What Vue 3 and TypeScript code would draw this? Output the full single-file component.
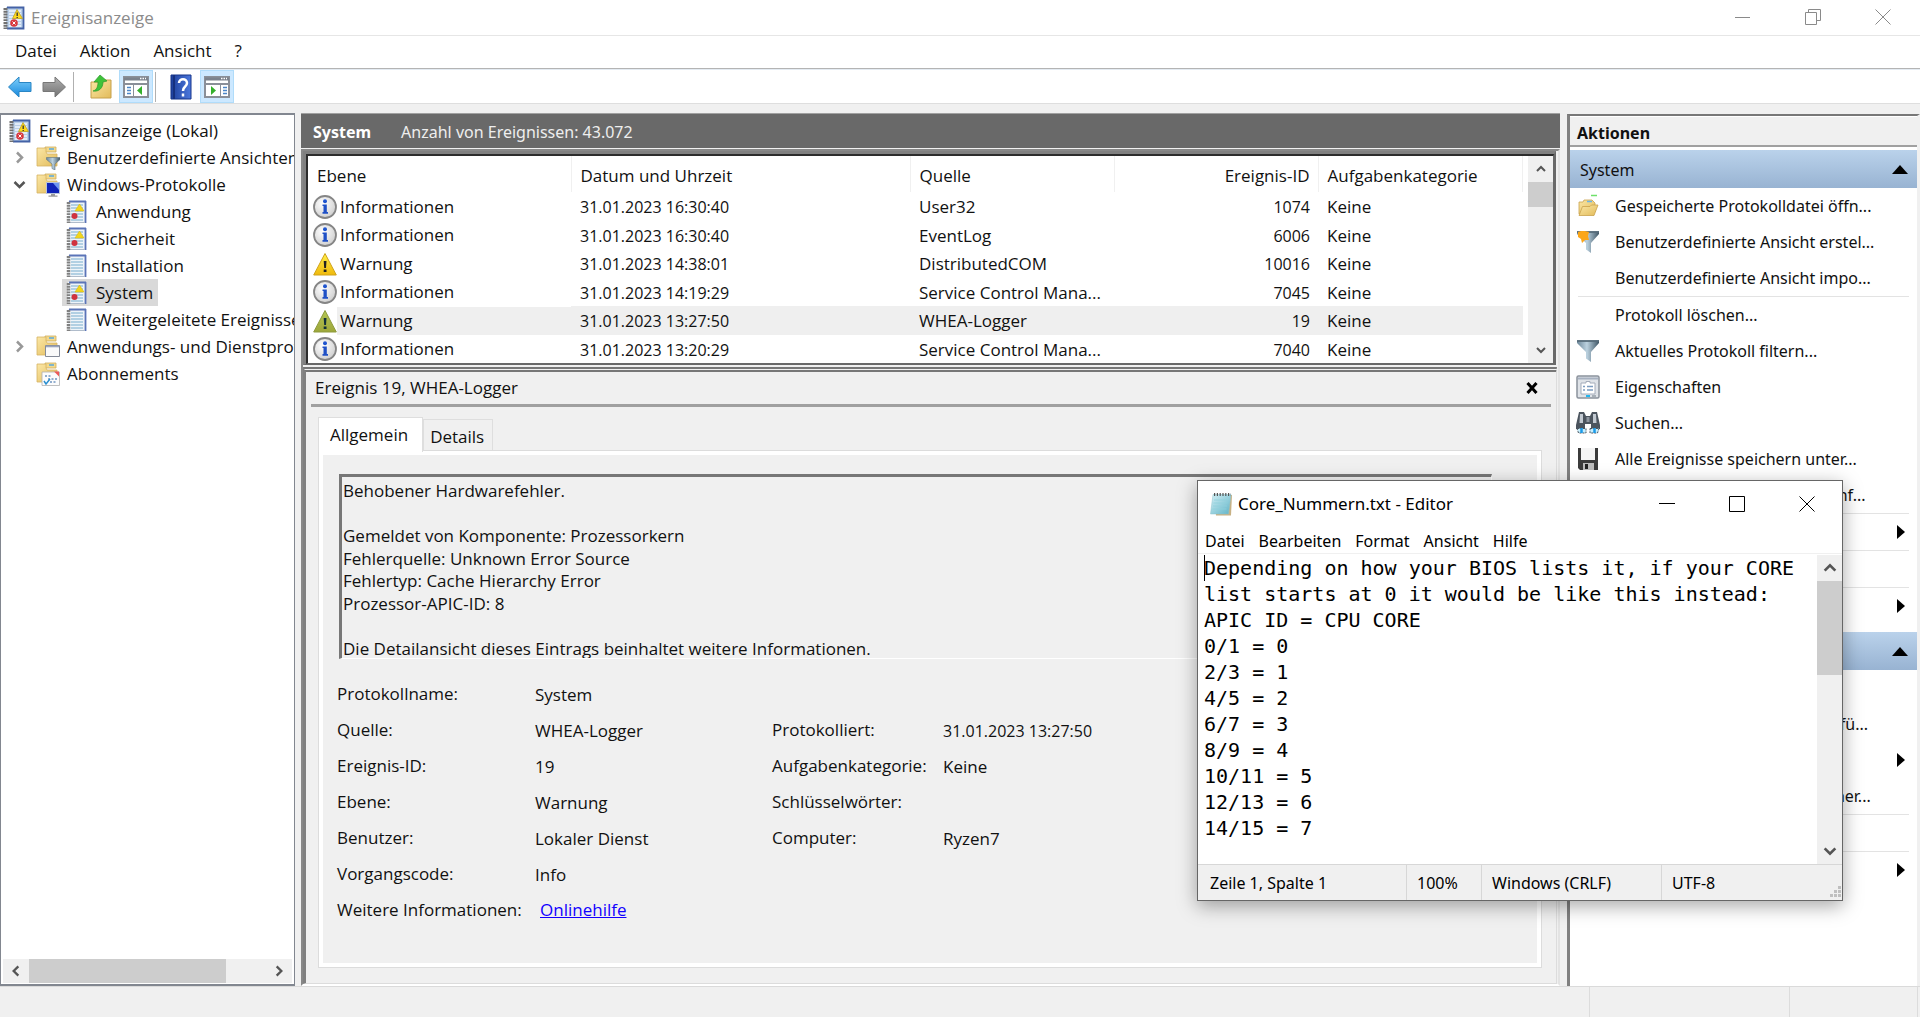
<script setup lang="ts">
import { ref } from 'vue'

interface TreeNode { label: string; icon: string; level: number; arrow?: 'open' | 'closed'; selected?: boolean }
interface EventRow { level: 'Informationen' | 'Warnung'; date: string; source: string; id: number; selected?: boolean }
interface Action { label: string; icon?: string; sub?: boolean; line?: boolean }

const tree: TreeNode[] = [
  { label: 'Ereignisanzeige (Lokal)', icon: 'viewer', level: 0 },
  { label: 'Benutzerdefinierte Ansichten', icon: 'folder-filter', level: 1, arrow: 'closed' },
  { label: 'Windows-Protokolle', icon: 'folder-screen', level: 1, arrow: 'open' },
  { label: 'Anwendung', icon: 'log', level: 2 },
  { label: 'Sicherheit', icon: 'log', level: 2 },
  { label: 'Installation', icon: 'log-plain', level: 2 },
  { label: 'System', icon: 'log', level: 2, selected: true },
  { label: 'Weitergeleitete Ereignisse', icon: 'log-plain', level: 2 },
  { label: 'Anwendungs- und Dienstprotokolle', icon: 'folder-window', level: 1, arrow: 'closed' },
  { label: 'Abonnements', icon: 'folder-calendar', level: 1 },
]

const events: EventRow[] = [
  { level: 'Informationen', date: '31.01.2023 16:30:40', source: 'User32', id: 1074 },
  { level: 'Informationen', date: '31.01.2023 16:30:40', source: 'EventLog', id: 6006 },
  { level: 'Warnung', date: '31.01.2023 14:38:01', source: 'DistributedCOM', id: 10016 },
  { level: 'Informationen', date: '31.01.2023 14:19:29', source: 'Service Control Mana...', id: 7045 },
  { level: 'Warnung', date: '31.01.2023 13:27:50', source: 'WHEA-Logger', id: 19, selected: true },
  { level: 'Informationen', date: '31.01.2023 13:20:29', source: 'Service Control Mana...', id: 7040 },
]

const message: string[] = [
  'Behobener Hardwarefehler.',
  '',
  'Gemeldet von Komponente: Prozessorkern',
  'Fehlerquelle: Unknown Error Source',
  'Fehlertyp: Cache Hierarchy Error',
  'Prozessor-APIC-ID: 8',
  '',
  'Die Detailansicht dieses Eintrags beinhaltet weitere Informationen.',
]

const fields: string[][] = [
  ['Protokollname:', 'System', '', ''],
  ['Quelle:', 'WHEA-Logger', 'Protokolliert:', '31.01.2023 13:27:50'],
  ['Ereignis-ID:', '19', 'Aufgabenkategorie:', 'Keine'],
  ['Ebene:', 'Warnung', 'Schlüsselwörter:', ''],
  ['Benutzer:', 'Lokaler Dienst', 'Computer:', 'Ryzen7'],
  ['Vorgangscode:', 'Info', '', ''],
]

const logActions: Action[] = [
  { label: 'Gespeicherte Protokolldatei öffn...', icon: 'open' },
  { label: 'Benutzerdefinierte Ansicht erstel...', icon: 'filter-new' },
  { label: 'Benutzerdefinierte Ansicht impo...' },
  { label: 'Protokoll löschen...', line: true },
  { label: 'Aktuelles Protokoll filtern...', icon: 'filter' },
  { label: 'Eigenschaften', icon: 'props' },
  { label: 'Suchen...', icon: 'find' },
  { label: 'Alle Ereignisse speichern unter...', icon: 'save' },
  { label: 'Aufgabe an dieses Protokoll anf...' },
  { label: 'Ansicht', sub: true, line: true },
  { label: 'Aktualisieren', line: true },
  { label: 'Hilfe', sub: true, line: true },
]
const eventActions: Action[] = [
  { label: 'Ereigniseigenschaften' },
  { label: 'Aufgabe an dieses Ereignis anfü...' },
  { label: 'Kopieren', sub: true },
  { label: 'Ausgewählte Ereignisse speicher...' },
  { label: 'Aktualisieren', line: true },
  { label: 'Hilfe', sub: true, line: true },
]
const groups = [
  { title: 'System', items: logActions },
  { title: 'Ereignis 19, WHEA-Logger', items: eventActions },
]

const note = ref(
  [
    'Depending on how your BIOS lists it, if your CORE list starts at 0 it would be like this instead:',
    'APIC ID = CPU CORE',
    '0/1 = 0', '2/3 = 1', '4/5 = 2', '6/7 = 3', '8/9 = 4',
    '10/11 = 5', '12/13 = 6', '14/15 = 7',
  ].join('\n'),
)
</script>

<template>
  <div class="app">
    <svg class="defs" aria-hidden="true">
      <defs>
        <linearGradient id="gFolder" x1="0" y1="0" x2="1" y2="1"><stop offset="0" stop-color="#fbe7a6" /><stop offset="1" stop-color="#e2bb5a" /></linearGradient>
        <linearGradient id="gBlue" x1="0" y1="0" x2="0" y2="1"><stop offset="0" stop-color="#7fd0fb" /><stop offset="1" stop-color="#1787dc" /></linearGradient>
        <linearGradient id="gGray" x1="0" y1="0" x2="0" y2="1"><stop offset="0" stop-color="#b0b0b0" /><stop offset="1" stop-color="#727272" /></linearGradient>
        <linearGradient id="gSteel" x1="0" y1="0" x2="1" y2="0"><stop offset="0" stop-color="#6c8799" /><stop offset=".45" stop-color="#bcd2e0" /><stop offset="1" stop-color="#3f5665" /></linearGradient>
        <linearGradient id="gWarn" x1="0" y1="0" x2="0" y2="1"><stop offset="0" stop-color="#fff04a" /><stop offset="1" stop-color="#f0b90c" /></linearGradient>
        <linearGradient id="gOlive" x1="0" y1="0" x2="0" y2="1"><stop offset="0" stop-color="#b4c653" /><stop offset="1" stop-color="#9da63a" /></linearGradient>
        <radialGradient id="gInfo" cx=".4" cy=".35" r=".7"><stop offset="0" stop-color="#fff" /><stop offset="1" stop-color="#cdcdcd" /></radialGradient>
        <linearGradient id="gHelp" x1="0" y1="0" x2="1" y2="0"><stop offset="0" stop-color="#1d3f9c" /><stop offset="1" stop-color="#4c78dc" /></linearGradient>
        <linearGradient id="gPad" x1="0" y1="0" x2="1" y2="1"><stop offset="0" stop-color="#d4f0f6" /><stop offset="1" stop-color="#5fb3c6" /></linearGradient>
      </defs>
      <symbol id="log-plain" viewBox="0 0 24 24">
        <path d="M3 1h18v21H3z" fill="#eef4f9" />
        <path d="M6 5h12M6 8h12M6 11h12M6 14h12M6 17h12M6 20h12" stroke="#9ec4dc" stroke-width="1.3" />
        <path d="M4 1.500h17M20.500 1v22" fill="none" stroke="#5b74b8" stroke-width="1.800" /><path d="M4 22.500h16" stroke="#b0bccb" />
        <path d="M3.500 2v21" stroke="#808080" stroke-width="3.500" stroke-dasharray="1.900 .9" />
      </symbol>
      <symbol id="log" viewBox="0 0 24 24">
        <use href="#log-plain" />
        <path d="M14.500 4l4.500 7h-9z" fill="#f3d61c" stroke="#d6b818" stroke-width=".6" />
        <circle cx="9.500" cy="16" r="3" fill="#d03340" />
      </symbol>
      <symbol id="viewer" viewBox="0 0 24 24">
        <path d="M4 1h18v22H4z" fill="#b9cfe8" />
        <path d="M7 5h12M7 8h12M7 11h12M7 14h12M7 17h12M7 20h12" stroke="#eef5fc" stroke-width="1.300" />
        <path d="M5 1.500h16.500v21H5" fill="none" stroke="#4462a6" stroke-width="1.800" />
        <path d="M3.500 2v21" stroke="#707070" stroke-width="4" stroke-dasharray="1.900 .9" />
        <path d="M15 3.500l5.500 9h-10z" fill="#ffd91c" stroke="#b89b18" stroke-width=".7" />
        <path d="M15.200 6.500v3.500M15.200 11v1" stroke="#333" stroke-width="1.300" />
        <circle cx="12" cy="17" r="3.800" fill="#d8383e" /><path d="M10.500 15.500l3 3M13.500 15.500l-3 3" stroke="#fff" />
      </symbol>
      <symbol id="folder" viewBox="0 0 24 24">
        <path d="M9 1h11v5H9z" fill="#f4d98c" stroke="#cfae5e" stroke-width=".8" /><path d="M13 3h5" stroke="#58a8e0" stroke-width="1.500" />
        <path d="M1 2h9v4l1 2h10v12H1z" fill="url(#gFolder)" stroke="#d5b262" stroke-width=".8" />
      </symbol>
      <symbol id="folder-filter" viewBox="0 0 24 24">
        <use href="#folder" /><path d="M10.500 11.500h13.500v2l-5 4.500v6l-3-1.500v-4.500l-5.500-4.500z" fill="url(#gSteel)" stroke="#5f7480" stroke-width=".6" />
      </symbol>
      <symbol id="folder-screen" viewBox="0 0 24 24">
        <use href="#folder" /><path d="M10.500 9.500h13v11h-13z" fill="#1023b8" stroke="#b8c4dc" /><path d="M17 10h6v7z" fill="#6f95f0" /><path d="M15 21h4v1.500h2.500v1.300h-9v-1.300H15z" fill="#9a9a9a" />
      </symbol>
      <symbol id="folder-window" viewBox="0 0 24 24">
        <use href="#folder" /><path d="M9.500 10.500h14v11h-14z" fill="#fafafa" stroke="#858b98" /><path d="M10 11.500h13" stroke="#9aa4bd" stroke-width="1.600" />
      </symbol>
      <symbol id="folder-calendar" viewBox="0 0 24 24">
        <use href="#folder" /><path d="M6 10h17.500v13.500H6z" fill="#fcfcfc" stroke="#b0b0b0" stroke-width=".8" /><path d="M18 9.500h5v5z" fill="#ee5a5a" />
        <path d="M9 14h7M12 17h10M14 20h7" stroke="#6f94c0" stroke-width="1.600" stroke-dasharray="2 1.500" /><path d="M8 19l2 3 4-5" fill="none" stroke="#2a8fd0" stroke-width="1.500" />
      </symbol>
      <symbol id="info" viewBox="0 0 24 24">
        <circle cx="12" cy="12" r="11" fill="url(#gInfo)" stroke="#858585" stroke-width="1.800" />
        <circle cx="12" cy="6.300" r="2" fill="#1f55cf" /><path d="M9.500 9.500h4.300V17H15v1.700H9.500V17h1v-6h-1z" fill="#1f50c6" />
      </symbol>
      <symbol id="warn" viewBox="0 0 24 24"><path d="M12 1.500L23.300 23H.7z" fill="url(#gWarn)" stroke="#cfa21a" stroke-linejoin="round" /><path d="M10.700 9h2.800l-.5 7h-1.800zM10.700 17.500h2.800V20h-2.800z" fill="#222" /></symbol>
      <symbol id="warn-sel" viewBox="0 0 24 24"><path d="M12 1.500L23.300 23H.7z" fill="url(#gOlive)" stroke="#8d9a3c" stroke-linejoin="round" /><path d="M10.700 9h2.800l-.5 7h-1.800zM10.700 17.500h2.800V20h-2.800z" fill="#12303a" /></symbol>
      <symbol id="open" viewBox="0 0 24 24">
        <path d="M15 1.500h6" stroke="#6fe06a" stroke-width="1.500" />
        <path d="M3 20V8h4l1-2h8l3 3v9z" fill="url(#gFolder)" stroke="#c9a24c" stroke-width=".8" /><path d="M11 7.500h5" stroke="#6db4e4" stroke-width="1.500" />
        <path d="M3 21.500l3.500-9H14l1.500-1.500H22l-4 10.500z" fill="url(#gFolder)" stroke="#c9a24c" stroke-width=".8" />
      </symbol>
      <symbol id="filter" viewBox="0 0 24 24"><path d="M1 1.500h22v2.500l-8 9V23l-5-3.500v-6.500L1 4z" fill="url(#gSteel)" /><path d="M1 2h22" stroke="#566b7a" stroke-width="1.800" /></symbol>
      <symbol id="filter-new" viewBox="0 0 24 24"><use href="#filter" /><path d="M2 2l3-1 4 0 4 1-1 4 1 4-4 0-3 3-1-4-3-2z" fill="#fba618" /></symbol>
      <symbol id="props" viewBox="0 0 24 24">
        <rect x="1" y="1" width="22" height="22" rx="1.500" fill="#dfe3e8" stroke="#8b929c" stroke-width="1.500" /><path d="M2 3.500h20" stroke="#a7b1c0" stroke-width="2" />
        <path d="M5 8h5V6.500h4V8h5v11H5z" fill="#fff" stroke="#a4acba" /><path d="M7 11.500h2M7 15h2M11 11.500h6M11 15h6" stroke="#7c9cc0" stroke-width="1.300" /><path d="M10 21h4" stroke="#21b6ef" stroke-width="2" /><path d="M16 21h4" stroke="#a8b0b8" stroke-width="2" />
      </symbol>
      <symbol id="find" viewBox="0 0 24 24">
        <path d="M3 1h5l2 4h4l2-4h5l3 13v4h-9v-5h-6v5H0v-4z" fill="#4b545e" /><path d="M4 3h3v9H3.500zM17 3h3l.5 9H17z" fill="#c3cad2" /><path d="M10.500 6h3v5h-3z" fill="#8e96a0" />
        <path d="M1 17.500h9V22H2.500zM14 17.500h9L21.500 22H14z" fill="#c6efff" stroke="#4c5660" stroke-dasharray="2 1" /><path d="M5.500 17v5M18.500 17v5" stroke="#1c9ae8" stroke-width="2.500" />
      </symbol>
      <symbol id="save" viewBox="0 0 24 24"><path d="M2 1h20v22H4l-2-2z" fill="#3b3b3b" /><path d="M5 1h14v12H5z" fill="#f5f5f5" /><path d="M7 16h11v7H7z" fill="#bdbdbd" /><path d="M9 17h3v5H9z" fill="#222" /></symbol>
      <symbol id="pad" viewBox="0 0 24 24">
        <path d="M5 3h18l-1 20.500H7z" fill="#c8b184" /><path d="M4 2.500h18L19.500 22H1.500z" fill="url(#gPad)" stroke="#8fc2cd" stroke-width=".5" />
        <path d="M5 8h14M4.500 11h14M4 14h14M3.500 17h14" stroke="#8fd0dc" stroke-width=".8" /><path d="M5 2.500h17" stroke="#555" stroke-width="3" stroke-dasharray="1.200 1.600" />
      </symbol>
      <symbol id="up" viewBox="0 0 12 12"><path d="M2 8l4-4 4 4" fill="none" stroke="#555" stroke-width="2" /></symbol>
      <symbol id="down" viewBox="0 0 12 12"><path d="M2 4l4 4 4-4" fill="none" stroke="#555" stroke-width="2" /></symbol>
      <symbol id="left" viewBox="0 0 12 12"><path d="M8 2L4 6l4 4" fill="none" stroke="#555" stroke-width="2" /></symbol>
      <symbol id="right" viewBox="0 0 12 12"><path d="M4 2l4 4-4 4" fill="none" stroke="#555" stroke-width="2" /></symbol>
    </svg>

    <header class="titlebar">
      <svg class="ico"><use href="#viewer" /></svg>
      <h1>Ereignisanzeige</h1>
      <div class="winbtns">
        <button aria-label="Minimieren"><svg width="16" height="16"><path d="M0 8.500h15" stroke="#8a8a8a" /></svg></button>
        <button aria-label="Wiederherstellen"><svg width="16" height="16" fill="none" stroke="#8a8a8a"><path d="M.5 3.500h11v12H.5zM3.500 3V.5h12v11H12" /></svg></button>
        <button aria-label="Schließen"><svg width="16" height="16"><path d="M.5.500l15 15M15.500.500l-15 15" stroke="#8a8a8a" /></svg></button>
      </div>
    </header>
    <nav class="menubar">
      <button>Datei</button><button>Aktion</button><button>Ansicht</button><button>?</button>
    </nav>
    <div class="toolbar">
      <button class="tb arrow" aria-label="Zurück"><svg width="26" height="24" viewBox="0 0 26 24"><path d="M1.500 12L12 2v5.500h12v9H12V22z" fill="url(#gBlue)" stroke="#2a86c4" /></svg></button>
      <button class="tb arrow" aria-label="Vorwärts"><svg width="26" height="24" viewBox="0 0 26 24"><path d="M24.500 12L14 2v5.500H2v9h12V22z" fill="url(#gGray)" stroke="#777" /></svg></button>
      <i class="sep"></i>
      <button class="tb up" aria-label="Nach oben"><svg width="24" height="26" viewBox="0 0 24 26"><path d="M2 24V8h9l2-2h9v18z" fill="url(#gFolder)" stroke="#c6a04c" /><path d="M4 17c4-1 5-5 5-9H5l6-7 7 6-4 1c0 6-4 10-10 9z" fill="#3fc23a" stroke="#2b9a2a" stroke-width=".7" /></svg></button>
      <button class="tb on" aria-label="Konsolenstruktur"><svg width="26" height="22" viewBox="0 0 26 22"><path d="M1 1h24v20H1z" fill="#fff" stroke="#8a8f98" stroke-width="2" /><path d="M1 3h24" stroke="#7b828d" stroke-width="3" /><path d="M1 8h24" stroke="#8a8f98" stroke-width="2" /><path d="M17 2.500h6" stroke="#fff" stroke-width="1.500" stroke-dasharray="1.500 1" /><path d="M10.500 8v13" stroke="#8a8f98" /><path d="M4 11.500h4M4 14.500h4M4 17.500h4" stroke="#4b86c8" stroke-width="1.500" /><path d="M19 10v9l-5-4.500z" fill="#35b02c" /></svg></button>
      <i class="sep"></i>
      <button class="tb help" aria-label="Hilfe"><svg width="22" height="26" viewBox="0 0 22 26"><path d="M1 1h20v24H1z" fill="url(#gHelp)" stroke="#17348a" /><path d="M4 1v24" stroke="#16307e" stroke-width="2" /><path d="M9 9c0-5 8-5 8 0 0 4-4 3-4 8M13 19.500v3" fill="none" stroke="#fff" stroke-width="2.500" /></svg></button>
      <button class="tb on" aria-label="Aktionsbereich"><svg width="26" height="22" viewBox="0 0 26 22"><path d="M1 1h24v20H1z" fill="#fff" stroke="#8a8f98" stroke-width="2" /><path d="M1 3h24" stroke="#7b828d" stroke-width="3" /><path d="M1 8h24" stroke="#8a8f98" stroke-width="2" /><path d="M17 2.500h6" stroke="#fff" stroke-width="1.500" stroke-dasharray="1.500 1" /><path d="M16.500 8v13" stroke="#8a8f98" /><path d="M19 11.500h4M19 14.500h4M19 17.500h4" stroke="#4b86c8" stroke-width="1.500" /><path d="M7 10v9l5-4.500z" fill="#35b02c" /></svg></button>
    </div>

    <main class="work">
      <aside class="tree">
        <ul>
          <li v-for="n in tree" :key="n.label" :class="['lv' + n.level, { sel: n.selected }]">
            <span class="chev"><svg v-if="n.arrow" width="15" height="15" :class="n.arrow"><use :href="n.arrow === 'open' ? '#down' : '#right'" /></svg></span>
            <span class="node"><svg class="ico"><use :href="'#' + n.icon" /></svg><span class="lbl">{{ n.label }}</span></span>
          </li>
        </ul>
        <div class="hscroll">
          <button aria-label="Nach links"><svg width="14" height="14"><use href="#left" /></svg></button>
          <div class="track"><div class="thumb"></div></div>
          <button aria-label="Nach rechts"><svg width="14" height="14"><use href="#right" /></svg></button>
        </div>
      </aside>

      <section class="center">
        <div class="head"><b>System</b><span>Anzahl von Ereignissen: 43.072</span></div>
        <div class="frame">
          <div class="list">
            <table>
              <colgroup><col class="c1" /><col class="c2" /><col class="c3" /><col class="c4" /><col /></colgroup>
              <thead><tr><th>Ebene</th><th>Datum und Uhrzeit</th><th>Quelle</th><th class="num">Ereignis-ID</th><th>Aufgabenkategorie</th></tr></thead>
              <tbody>
                <tr v-for="(e, i) in events" :key="i" :class="{ sel: e.selected }">
                  <td class="lvl"><div><svg class="ico"><use :href="e.level === 'Warnung' ? (e.selected ? '#warn-sel' : '#warn') : '#info'" /></svg><span>{{ e.level }}</span></div></td>
                  <td class="small">{{ e.date }}</td><td>{{ e.source }}</td><td class="num small">{{ e.id }}</td><td>Keine</td>
                </tr>
              </tbody>
            </table>
            <div class="vscroll">
              <button aria-label="Nach oben"><svg width="12" height="12"><use href="#up" /></svg></button>
              <div class="thumb"></div>
              <button class="end" aria-label="Nach unten"><svg width="12" height="12"><use href="#down" /></svg></button>
            </div>
          </div>
          <div class="detail">
            <div class="dhead"><h2>Ereignis 19, WHEA-Logger</h2>
              <button aria-label="Vorschau schließen"><svg width="12" height="12"><path d="M1.500 1l9 10M10.500 1l-9 10" stroke="#000" stroke-width="3" /></svg></button>
            </div>
            <div class="tabs" role="tablist"><button role="tab" class="active">Allgemein</button><button role="tab">Details</button></div>
            <div class="pane">
              <div class="msg"><p v-for="(m, i) in message" :key="i">{{ m }}</p></div>
              <dl>
                <template v-for="f in fields" :key="f[0]">
                  <dt>{{ f[0] }}</dt><dd>{{ f[1] }}</dd><dt>{{ f[2] }}</dt><dd :class="{ small: f[3].length > 9 }">{{ f[3] }}</dd>
                </template>
                <dt>Weitere Informationen:</dt><dd class="link"><a href="#">Onlinehilfe</a></dd>
              </dl>
            </div>
          </div>
        </div>
      </section>

      <aside class="actions">
        <h2>Aktionen</h2>
        <section v-for="g in groups" :key="g.title">
          <h3><span>{{ g.title }}</span><svg width="16" height="10"><path d="M8 0l8 9H0z" /></svg></h3>
          <ul>
            <li v-for="a in g.items" :key="a.label" :class="{ line: a.line }">
              <button>
                <span class="slot"><svg v-if="a.icon" class="ico"><use :href="'#' + a.icon" /></svg></span>
                <span class="txt">{{ a.label }}</span>
                <svg v-if="a.sub" class="more" width="8" height="14"><path d="M0 0l8 7-8 7z" /></svg>
              </button>
            </li>
          </ul>
        </section>
      </aside>
    </main>
    <footer class="status"><span></span><span class="s2"></span><span class="s3"></span></footer>

    <section class="editor" aria-label="Core_Nummern.txt - Editor">
      <header>
        <svg class="ico"><use href="#pad" /></svg><span>Core_Nummern.txt - Editor</span>
        <div class="winbtns">
          <button aria-label="Minimieren"><svg width="16" height="16"><path d="M0 7.500h16" stroke="#000" /></svg></button>
          <button aria-label="Maximieren"><svg width="16" height="16"><path d="M.5.500h15v15H.5z" fill="none" stroke="#000" /></svg></button>
          <button aria-label="Schließen"><svg width="16" height="16"><path d="M.5.500l15 15M15.500.500l-15 15" stroke="#000" /></svg></button>
        </div>
      </header>
      <nav><button>Datei</button><button>Bearbeiten</button><button>Format</button><button>Ansicht</button><button>Hilfe</button></nav>
      <div class="body">
        <i class="caret"></i>
        <textarea v-model="note" aria-label="Text" spellcheck="false"></textarea>
        <div class="vscroll">
          <button aria-label="Nach oben"><svg width="16" height="16"><use href="#up" /></svg></button>
          <div class="thumb"></div>
          <button class="end" aria-label="Nach unten"><svg width="16" height="16"><use href="#down" /></svg></button>
        </div>
      </div>
      <footer>
        <span class="pos">Zeile 1, Spalte 1</span><span class="zoom">100%</span><span class="eol">Windows (CRLF)</span><span class="enc">UTF-8</span>
        <svg class="grip" width="12" height="12" fill="#bfbfbf"><path d="M9 0h3v3H9zM9 4h3v3H9zM9 8h3v3H9zM5 4h3v3H5zM5 8h3v3H5zM1 8h3v3H1z" /></svg>
      </footer>
    </section>
  </div>
</template>

<style>
body { margin: 0; background: #f0f0f0; }
</style>

<style scoped>
* { box-sizing: border-box; }
.app { position: relative; display: flex; flex-direction: column; min-height: 100vh; overflow: hidden; background: #f0f0f0; color: #111; font: 17px/24px "Open Sans", "Noto Sans", sans-serif; }
.defs { position: absolute; width: 0; height: 0; }
button { margin: 0; padding: 0; border: 0; background: none; color: inherit; font: inherit; text-align: left; }
ul, dl, dd, p, h1, h2, h3 { margin: 0; padding: 0; font-size: inherit; font-weight: 400; list-style: none; }
svg { display: block; flex: none; }
.ico { width: 24px; height: 24px; }
.small { font-size: 16px; }

.titlebar { display: flex; align-items: center; height: 36px; padding-left: 2px; background: #fff; border-bottom: 1px solid #e6e6e6; color: #8c8c8c; }
.titlebar h1 { margin-left: 5px; }
.winbtns { display: flex; margin-left: auto; }
.winbtns button { display: flex; justify-content: center; width: 70px; }
.titlebar .winbtns { align-self: flex-start; padding: 9px 2px 0 0; }
.menubar { display: flex; gap: 23px; height: 33px; padding: 3px 15px 6px; background: #fff; border-bottom: 1px solid #b4b4b4; }
.toolbar { display: flex; align-items: center; height: 35px; padding-left: 3px; background: #fff; border-top: 1px solid #e4ebf2; border-bottom: 1px solid #dedede; }
.tb { display: flex; align-items: center; justify-content: center; width: 34px; height: 33px; }
.tb.on { background: #cce8ff; border: 1px solid #b0dcfa; }
.tb.up { margin-left: 10px; }
.tb.up + .tb { margin-left: 1px; }
.tb.help { margin: 0 2px 0 8px; }
.sep { width: 1px; height: 30px; margin: 0 0 0 2px; background: #b0b0b0; }

.work { display: flex; flex: 1; margin-top: 9px; min-height: 0; }
.tree { display: flex; flex-direction: column; width: 295px; flex: none; background: #fff; border: 1px solid #828790; border-width: 2px 1px; }
.tree ul { flex: 1; padding-top: 2px; overflow: hidden; }
.tree li { display: flex; height: 27px; align-items: center; white-space: nowrap; }
.chev { width: 32px; flex: none; padding-left: 11px; }
.chev .closed { opacity: .6; }
.node { display: flex; align-items: center; height: 27px; padding: 0 5px 0 3px; }
.lbl { margin-left: 7px; }
.lv0 .chev { width: 4px; padding: 0; }
.lv2 .chev { width: 61px; }
.sel .node { background: #d9d9d9; }
.hscroll { display: flex; height: 24px; margin: 0 2px 1px; background: #f0f0f0; }
.hscroll button { display: flex; align-items: center; justify-content: center; width: 26px; }
.hscroll .track { flex: 1; }
.hscroll .thumb { width: 83%; height: 24px; background: #cdcdcd; }

.center { display: flex; flex-direction: column; flex: 1; min-width: 0; margin: 0 7px 0 6px; }
.head { display: flex; align-items: center; gap: 30px; height: 35px; padding: 2px 0 0 12px; background: #696969; border-top: 1px solid #a0a0a0; color: #eee; font-family: "Noto Sans", sans-serif; font-size: 16px; }
.head b { color: #fff; }
.frame { display: flex; flex-direction: column; flex: 1; margin-top: 1px; border: 2px solid; border-color: #888 #e3e3e3 #fff #888; }
.list { display: flex; height: 214px; margin-right: 2px; background: #fff; border: 5px solid #696969; border-width: 5px 3px 2px 5px; border-top-style: ridge; border-left-style: ridge; border-top-color: #808080; border-left-color: #808080; overflow: hidden; }
table { flex: 1; align-self: flex-start; margin-right: 5px; border-collapse: collapse; table-layout: fixed; }
.c1 { width: 263px; } .c2 { width: 339px; } .c3 { width: 204px; } .c4 { width: 204px; }
th { height: 36px; padding: 3px 8px 0 9px; border-right: 1px solid #f0f0f0; font-weight: 400; text-align: left; white-space: nowrap; }
td { height: 28px; padding: 1px 8px 0 9px; white-space: nowrap; }
tr:nth-child(odd) td { height: 29px; }
.num { text-align: right; }
td.lvl { padding: 0 0 0 5px; }
.lvl div { display: flex; height: 28px; align-items: center; }
.lvl span { flex: 1; align-self: stretch; padding: 2px 0 0 3px; }
tr.sel td:not(.lvl), tr.sel .lvl span { background: #efefef; }
.vscroll { display: flex; flex-direction: column; width: 25px; flex: none; background: #f0f0f0; }
.vscroll button { display: flex; align-items: center; justify-content: center; height: 26px; }
.vscroll .thumb { height: 25px; background: #cdcdcd; }
.vscroll .end { margin-top: auto; }

.detail { display: flex; flex-direction: column; flex: 1; margin-top: 2px; margin-right: 1px; padding: 0 5px 15px; border-top: 5px double #777; border-left: 3px solid #808080; border-right: 1px solid #dcdcdc; border-bottom: 1px solid #dcdcdc; background: #f0f0f0; }
.dhead { display: flex; align-items: center; justify-content: space-between; height: 35px; padding: 0 13px 0 4px; border-bottom: 3px solid #a0a0a0; }
.tabs { display: flex; align-items: flex-end; height: 43px; margin-left: 7px; }
.tabs button { height: 31px; padding: 3px 8px 0 6px; border: 1px solid #dedede; border-bottom: 0; }
.tabs button.active { position: relative; height: 35px; margin-bottom: -2px; padding: 0 14px 0 11px; background: #fff; }
.pane { flex: 1; margin: 0 9px 0 7px; padding: 23px 49px 0 20px; border: 1px solid #dcdcdc; box-shadow: inset 0 0 0 4px #fff; }
.msg { height: 185px; padding: 3px 0 0 1px; border: 3px solid #777; border-right: 1px solid #fff; border-bottom: 1px solid #fff; overflow: hidden; }
.msg p { height: 22px; line-height: 22px; }
.msg p:nth-child(odd) { height: 23px; }
dl { display: grid; grid-template-columns: 198px 237px 171px auto; grid-auto-rows: 36px; margin: 17px 0 0 -2px; line-height: 36px; white-space: nowrap; }
dd { padding-top: 1px; }
.link { padding: 0 0 0 5px; }
a { color: #1200ff; }

.actions { width: 353px; flex: none; margin-top: 1px; padding-top: 3px; border-left: 3px solid #808080; border-top: 2px solid #777; border-right: 3px solid #f0f0f0; background: #fff; font-family: "Noto Sans", sans-serif; font-size: 16px; }
.actions h2 { height: 30px; margin-top: -2px; padding: 5px 0 0 7px; background: #f0f0f0; border-bottom: 2px solid #a0a0a0; font-weight: 700; line-height: 22px; }
.actions h3 { display: flex; align-items: center; justify-content: space-between; height: 38px; margin-top: 3px; padding: 2px 9px 0 10px; background: linear-gradient(#bad2eb, #98b3d2); }
.actions section + section h3 { margin-top: 8px; }
.actions li button { display: flex; align-items: center; width: 100%; height: 36px; padding: 0 12px 0 6px; }
.actions li.line::before { content: ""; display: block; height: 1px; margin: 0 8px; background: #e3e3e3; }
.slot { width: 39px; }
.txt { flex: 1; white-space: nowrap; }

.status { display: flex; height: 31px; border-top: 1px solid #dadada; }
.status span { flex: 1; border-right: 1px solid #dcdcdc; }
.status .s2 { flex: none; width: 200px; }
.status .s3 { flex: none; width: 128px; margin-right: 2px; }

.editor { position: absolute; top: 480px; right: 77px; display: flex; flex-direction: column; width: 646px; height: 421px; background: #fff; border: 1px solid #666; box-shadow: 0 5px 18px rgba(0, 0, 0, .35); color: #000; font-family: "Noto Sans", sans-serif; font-size: 16px; }
.editor header { display: flex; align-items: center; height: 45px; padding-left: 11px; }
.editor header > span { margin-left: 5px; font-size: 17px; }
.editor nav { display: flex; gap: 14px; height: 28px; padding: 2px 7px 0; border-bottom: 1px solid #f0f0f0; }
.body { position: relative; display: flex; flex: 1; min-height: 0; padding-top: 1px; }
.caret { position: absolute; left: 6px; top: 1px; width: 1px; height: 26px; background: #000; }
textarea { flex: 1; min-width: 0; padding: 0 0 0 6px; border: 0; outline: 0; background: #fff; color: #000; resize: none; overflow: hidden; font: 20px/26px "DejaVu Sans Mono", "Liberation Mono", monospace; }
.body .vscroll .thumb { height: 94px; }
.editor footer { position: relative; display: flex; height: 36px; background: #f0f0f0; border-top: 1px solid #d7d7d7; }
.editor footer span { padding: 4px 0 0 10px; border-right: 1px solid #d7d7d7; line-height: 28px; }
.editor footer .pos { width: 209px; padding-left: 12px; }
.editor footer .zoom { width: 75px; }
.editor footer .eol { width: 180px; }
.editor footer .enc { border: 0; }
.grip { position: absolute; right: 1px; bottom: 2px; }
</style>
